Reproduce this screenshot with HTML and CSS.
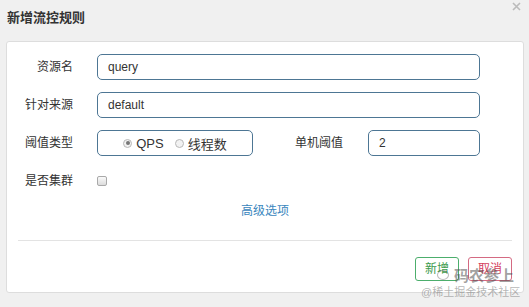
FILE: index.html
```html
<!DOCTYPE html>
<html lang="zh-CN">
<head>
	<meta charset="UTF-8">
	<title>新增流控规则</title>
	<link rel="stylesheet" href="styles.css">
</head>
<body>
	<div class="dialog">
		<div class="hd">
			<span class="title">新增流控规则</span>
			<svg class="close" width="9" height="9" viewBox="0 0 9 9"><path d="M1 1L8 8M8 1L1 8" stroke="#bbb" stroke-width="1.6"/></svg>
		</div>
		<div class="card">
			<div class="form">
				<label class="lbl">资源名</label>
				<div class="field"><div class="ipt">query</div></div>

				<label class="lbl">针对来源</label>
				<div class="field"><div class="ipt">default</div></div>

				<label class="lbl">阈值类型</label>
				<div class="field split">
					<div class="radios">
						<span class="radio on"></span><span class="rtxt">QPS</span>
						<span class="radio"></span><span class="rtxt">线程数</span>
					</div>
					<label class="lbl2">单机阈值</label>
					<div class="ipt small">2</div>
				</div>

				<label class="lbl">是否集群</label>
				<div class="field"><span class="chk"></span></div>
			</div>
			<div class="more"><a href="#">高级选项</a></div>
			<div class="line"></div>
			<div class="ft">
				<span class="btn ok">新增</span>
				<span class="btn cancel">取消</span>
			</div>
		</div>
	</div>
	<div class="mark">
		<div class="m1"><span class="wx"></span>码农参上</div>
		<div class="m2">@稀土掘金技术社区</div>
	</div>
</body>
</html>
```

FILE: styles.css
```css
*{margin: 0;padding: 0;box-sizing: border-box}
body{width: 529px;height: 307px;background: #f0f0f0;font-family: "Liberation Sans", "Noto Sans CJK SC", sans-serif;font-size: 12px;color: #333;overflow: hidden;position: relative;}
.dialog{padding: 0 5px 0 6px;}
.hd{height: 41px;display: flex;justify-content: space-between;align-items: flex-start;}
.title{font-size: 13px;font-weight: bold;color: #333;margin-top: 7px;margin-left: 1px;}
.close{margin-top: 2px;margin-right: 3px;}
.card{background: #fff;border: 1px solid #ddd;border-radius: 3px;height: 252px;padding: 12px 11px 0;}
.form{display: grid;grid-template-columns: 55px 383px;column-gap: 24px;row-gap: 12px;}
.lbl{height: 26px;line-height: 26px;text-align: right;color: #333;white-space: nowrap;}
.field{height: 26px;display: flex;align-items: center;}
.ipt{width: 100%;height: 26px;line-height: 24px;border: 1px solid #4d7694;border-radius: 5px;padding-left: 10px;color: #333;}
.ipt.small{width: 112px;flex: none;}
.split .radios{width: 156px;height: 26px;border: 1px solid #4d7694;border-radius: 5px;display: flex;align-items: center;justify-content: center;}
.radio{width: 9px;height: 9px;border-radius: 50%;border: 1px solid #b8b8b8;background: #f2f2f2;margin-right: 4px;position: relative;}
.radio.on::after{content: "";position: absolute;left: 1.5px;top: 1.5px;width: 4px;height: 4px;border-radius: 50%;background: #777;}
.rtxt{margin-right: 11px;font-size: 13px;}
.rtxt:last-child{margin-right: 0;}
.lbl2{flex: 1;text-align: right;margin-right: 25px;line-height: 26px;}
.chk{width: 10px;height: 10px;border: 1px solid #a9a9a9;border-radius: 2px;background: linear-gradient(#fafafa, #dcdcdc);}
.more{text-align: center;margin-top: 9px;height: 16px;line-height: 16px;}
.more a{color: #3a86bd;text-decoration: none;}
.line{height: 1px;background: #e3e3e3;margin-top: 21px;}
.ft{display: flex;justify-content: flex-end;gap: 9px;margin-top: 16px;}
.btn{width: 44px;height: 24px;line-height: 22px;text-align: center;border: 1px solid;border-radius: 3px;font-size: 12px;}
.ok{border-color: #4cae6c;color: #3c9a4c;}
.cancel{border-color: #d46a82;color: #d4405e;}
.mark{position: absolute;left: 421px;top: 283px;color: rgba(120,120,120,.55);pointer-events: none;}
.m1{position: absolute;left: 16px;top: -19px;display: flex;align-items: center;gap: 5px;font-size: 15px;font-weight: bold;white-space: nowrap;color: rgba(80,80,80,.55);}
.wx{width: 12px;height: 10px;border: 1.5px solid rgba(120,120,120,.5);border-radius: 50%;}
.m2{font-size: 11px;white-space: nowrap;}
```
